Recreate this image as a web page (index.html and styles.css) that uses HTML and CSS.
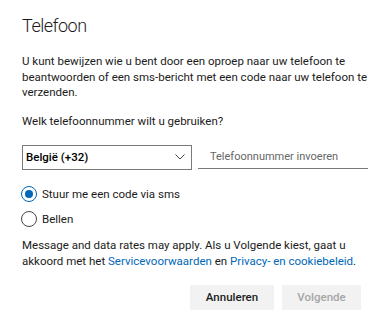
FILE: index.html
```html
<!DOCTYPE html>
<html lang="nl">
<head>
<meta charset="utf-8">
<title>Telefoon</title>
<link rel="stylesheet" href="styles.css">
</head>
<body>
<div class="dialog">
  <h1 class="title">Telefoon</h1>
  <p class="intro">U kunt bewijzen wie u bent door een oproep naar uw telefoon te beantwoorden of een sms-bericht met een code naar uw telefoon te verzenden.</p>
  <p class="question">Welk telefoonnummer wilt u gebruiken?</p>
  <div class="fields">
    <div class="select">
      <span class="select-value">België (+32)</span>
      <svg class="chevron" width="10" height="6" viewBox="0 0 10 6"><path d="M0.5 0.5 L5 5 L9.5 0.5" fill="none" stroke="#444" stroke-width="1"/></svg>
    </div>
    <div class="input"><span class="placeholder">Telefoonnummer invoeren</span></div>
  </div>
  <div class="radios">
    <div class="radio-row">
      <span class="radio checked"></span>
      <span class="radio-label">Stuur me een code via sms</span>
    </div>
    <div class="radio-row">
      <span class="radio"></span>
      <span class="radio-label">Bellen</span>
    </div>
  </div>
  <p class="disclaimer">Message and data rates may apply. Als u Volgende kiest, gaat u akkoord met het <a href="#" class="link">Servicevoorwaarden</a> en <a href="#" class="link">Privacy- en cookiebeleid</a>.</p>
  <div class="buttons">
    <button class="btn">Annuleren</button>
    <button class="btn disabled">Volgende</button>
  </div>
</div>
</body>
</html>
```
FILE: styles.css
```css
html, body {
  margin: 0;
  padding: 0;
  background: #ffffff;
}
body {
  font-family: Roboto, "Noto Sans", "Liberation Sans", sans-serif;
  color: #1b1b1b;
}
.dialog {
  width: 346px;
  padding: 12px 0 0 22px;
}
.title {
  margin: 0;
  font-size: 18px;
  line-height: 28px;
  font-weight: 300;
  letter-spacing: -0.5px;
  color: #1b1b1b;
}
.intro {
  margin: 14px 0 0 0;
  font-size: 11.5px;
  line-height: 15.5px;
}
.question {
  margin: 12px 0 0 0;
  font-size: 11.5px;
  line-height: 16px;
}
.fields {
  margin-top: 16px;
  display: grid;
  grid-template-columns: 170px 170px;
  column-gap: 6px;
}
.select {
  box-sizing: border-box;
  height: 25px;
  border: 1px solid #7a7a7a;
  display: flex;
  align-items: center;
  justify-content: space-between;
  padding: 0 6px 0 3px;
}
.select-value {
  font-size: 11.5px;
  font-weight: 500;
  color: #000;
}
.chevron {
  display: block;
}
.input {
  box-sizing: border-box;
  height: 24px;
  border-bottom: 1px solid #7a7a7a;
  display: flex;
  align-items: center;
  padding-left: 12px;
}
.placeholder {
  font-size: 11px;
  color: #666666;
}
.radios {
  margin-top: 14px;
  display: flex;
  flex-direction: column;
  gap: 5px;
}
.radio-row {
  display: flex;
  align-items: center;
  height: 20px;
  gap: 5px;
}
.radio {
  box-sizing: border-box;
  width: 16px;
  height: 16px;
  border-radius: 50%;
  border: 1px solid #444;
  display: flex;
  align-items: center;
  justify-content: center;
  margin-left: -1px;
}
.radio.checked {
  border: 1.5px solid #0067b8;
}
.radio.checked::after {
  content: "";
  width: 8px;
  height: 8px;
  border-radius: 50%;
  background: #0067b8;
}
.radio-label {
  font-size: 11.5px;
  line-height: 16px;
}
.disclaimer {
  margin: 8px 0 0 0;
  font-size: 11.5px;
  line-height: 16px;
}
.link {
  color: #0067b8;
  text-decoration: none;
}
.buttons {
  margin-top: 16px;
  display: flex;
  justify-content: flex-end;
  gap: 8px;
  padding-right: 7px;
}
.btn {
  height: 25px;
  border: none;
  background: #f2f2f2;
  font-family: inherit;
  font-size: 11.5px;
  font-weight: 500;
  color: #1b1b1b;
  padding: 0;
  width: 84px;
}
.btn.disabled {
  width: 79px;
  color: #a6a6a6;
}
```
